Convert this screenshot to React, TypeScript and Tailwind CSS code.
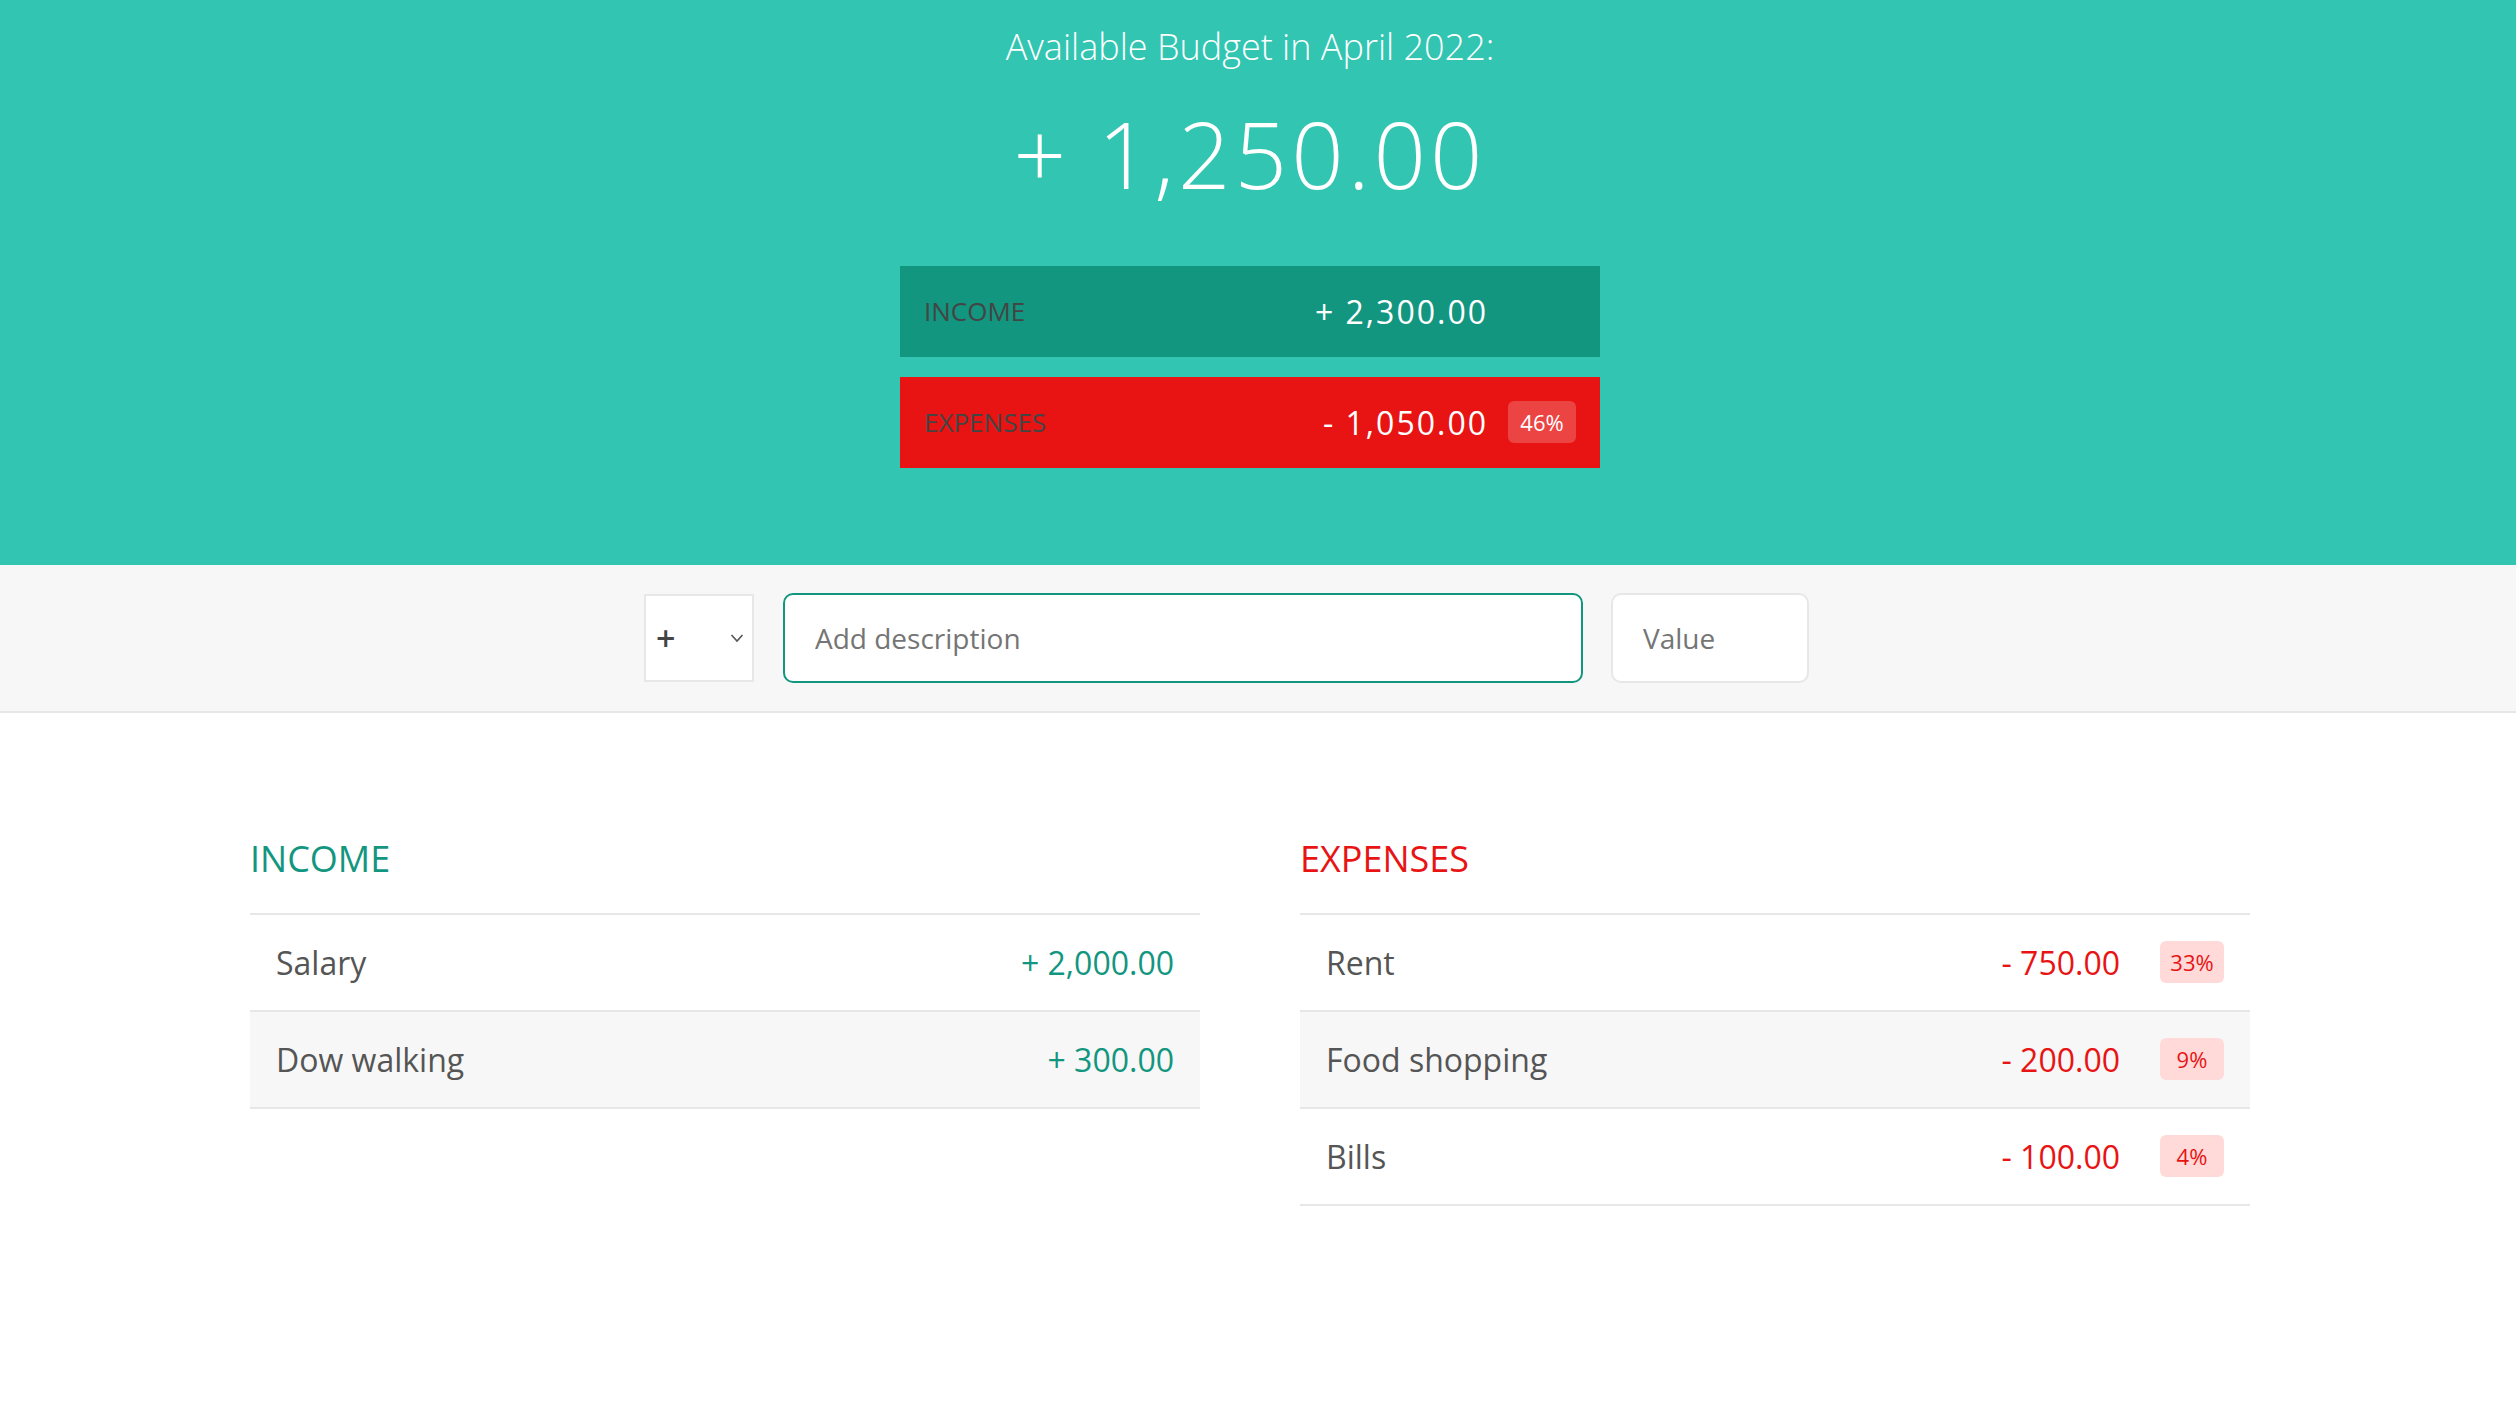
import React from "react";

const incomes = [
  { id: 0, description: "Salary", value: "+ 2,000.00" },
  { id: 1, description: "Dow walking", value: "+ 300.00" },
];

const expenses = [
  { id: 0, description: "Rent", value: "- 750.00", percentage: "33%" },
  { id: 1, description: "Food shopping", value: "- 200.00", percentage: "9%" },
  { id: 2, description: "Bills", value: "- 100.00", percentage: "4%" },
];

function ItemRow({
  description,
  value,
  percentage,
  even,
  first,
  type,
}: {
  description: string;
  value: string;
  percentage?: string;
  even: boolean;
  first: boolean;
  type: "inc" | "exp";
}) {
  return (
    <div
      className={
        "flex justify-between px-[26px] py-[26px] border-b-2 border-[#e7e7e7] " +
        (first ? "border-t-2 " : "") +
        (even ? "bg-[#f7f7f7]" : "bg-white")
      }
    >
      <div className="text-[32px] leading-[43px] text-[#555]">{description}</div>
      <div className="flex items-start">
        <div
          className={
            "text-[32px] leading-[43px] " +
            (type === "inc" ? "text-[#13967f]" : "text-[#e81414]")
          }
        >
          {value}
        </div>
        {percentage && (
          <div className="ml-10 w-16 rounded-md bg-[#ffdad9] py-1.5 text-center text-[22px] leading-[30px] text-[#e81414]">
            {percentage}
          </div>
        )}
      </div>
    </div>
  );
}

export default function App() {
  return (
    <div className="min-h-[1415px] bg-white font-['Open_Sans',sans-serif] text-[#555]">
      {/* TOP */}
      <div className="h-[565px] bg-[#31c5b2] pr-4 pt-[22px] flex justify-center">
        <div className="w-[700px] text-white">
          <div className="mb-5 text-center text-[36px] font-light leading-[49px]">
            Available Budget in April 2022:
          </div>
          <div className="mb-[50px] text-center text-[92px] font-light leading-[125px] tracking-[4px]">
            + 1,250.00
          </div>

          <div className="mb-5 flex justify-between bg-[#13967f] p-6 uppercase">
            <div className="mt-1 text-[26px] leading-[35px] text-[#444]">Income</div>
            <div className="flex items-start">
              <div className="text-[32px] leading-[43px] tracking-[2px]">+ 2,300.00</div>
              <div className="ml-5 w-[68px] py-1.5 text-[22px] leading-[30px]">&nbsp;</div>
            </div>
          </div>

          <div className="flex justify-between bg-[#e81414] p-6 uppercase">
            <div className="mt-1 text-[26px] leading-[35px] text-[#444]">Expenses</div>
            <div className="flex items-start">
              <div className="text-[32px] leading-[43px] tracking-[2px]">- 1,050.00</div>
              <div className="ml-5 w-[68px] rounded-md bg-white/20 py-1.5 text-center text-[22px] leading-[30px]">
                46%
              </div>
            </div>
          </div>
        </div>
      </div>

      {/* ADD */}
      <div className="flex justify-center border-b-2 border-[#e7e7e7] bg-[#f7f7f7] py-7 pr-4">
        <div className="flex items-center">
          <div className="mr-[29px] flex h-[88px] w-[110px] items-center justify-between border-2 border-[#e7e7e7] bg-white pl-2.5 pr-2">
            <span className="text-[34px] font-semibold leading-none text-[#444]">+</span>
            <svg width="14" height="10" viewBox="0 0 14 10" fill="none">
              <path d="M1.5 2 L7 8 L12.5 2" stroke="#555" strokeWidth="1.6" />
            </svg>
          </div>
          <input
            className="mr-[28px] w-[800px] rounded-[10px] border-2 border-[#13967f] bg-white px-[30px] py-6 text-[28px] leading-[38px] text-[#555] outline-none placeholder:text-[#757575]"
            placeholder="Add description"
          />
          <input
            className="mr-[47px] w-[198px] rounded-[10px] border-2 border-[#e7e7e7] bg-white px-[30px] py-6 text-[28px] leading-[38px] text-[#555] outline-none placeholder:text-[#757575]"
            placeholder="Value"
          />
        </div>
      </div>

      {/* LISTS */}
      <div className="mt-[121px] flex justify-center pr-4">
        <div className="flex w-[2000px]">
          <div className="mr-[100px] w-[950px]">
            <h2 className="mb-[30px] text-[36px] uppercase leading-[49px] text-[#13967f]">Income</h2>
            <div>
              {incomes.map((it, i) => (
                <ItemRow
                  key={it.id}
                  description={it.description}
                  value={it.value}
                  even={i % 2 === 1}
                  first={i === 0}
                  type="inc"
                />
              ))}
            </div>
          </div>
          <div className="w-[950px]">
            <h2 className="mb-[30px] text-[36px] uppercase leading-[49px] text-[#e81414]">Expenses</h2>
            <div>
              {expenses.map((it, i) => (
                <ItemRow
                  key={it.id}
                  description={it.description}
                  value={it.value}
                  percentage={it.percentage}
                  even={i % 2 === 1}
                  first={i === 0}
                  type="exp"
                />
              ))}
            </div>
          </div>
        </div>
      </div>
    </div>
  );
}
